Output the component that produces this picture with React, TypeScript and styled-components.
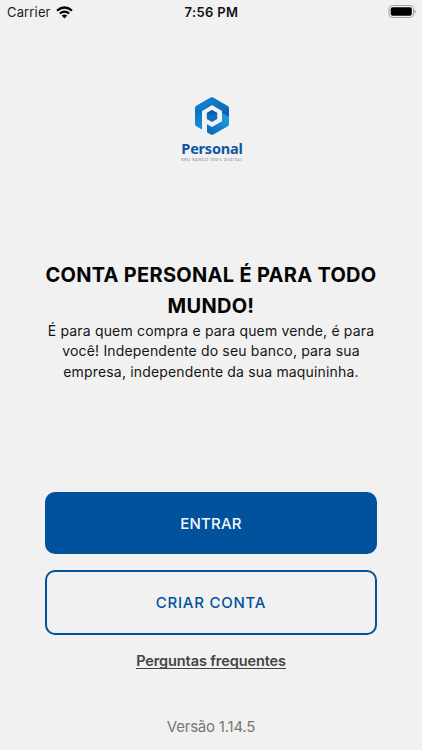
import React from "react";
import styled, { createGlobalStyle } from "styled-components";

const GlobalStyle = createGlobalStyle`
  * { box-sizing: border-box; }
  body { margin: 0; background: #f1f1f1; }
`;

const Screen = styled.main`
  width: 422px;
  height: 750px;
  overflow: hidden;
  display: flex;
  flex-direction: column;
  align-items: center;
  background: #f1f1f1;
  font-family: Inter, "Liberation Sans", sans-serif;
  color: #050505;
`;

const StatusBar = styled.header`
  width: 100%;
  height: 24px;
  padding: 0 6px 0 7px;
  display: grid;
  grid-template-columns: 1fr auto 1fr;
  align-items: center;
`;

const Carrier = styled.div`
  display: flex;
  align-items: center;
  gap: 5px;
  font-size: 13px;
  line-height: 24px;
  letter-spacing: 0.15px;
  color: #1c1c1c;
`;

const Clock = styled.time`
  font-size: 13px;
  font-weight: 600;
  letter-spacing: 0.35px;
  color: #111;
`;

const BatterySlot = styled.div`
  display: flex;
  justify-content: flex-end;
  height: 15px;
`;

const Brand = styled.div`
  margin-top: 72px;
  padding-left: 2px;
  height: 66px;
  display: flex;
  flex-direction: column;
  align-items: center;
`;

const BrandName = styled.div`
  margin-top: 5px;
  font-family: "Noto Sans", sans-serif;
  font-size: 14.5px;
  font-weight: 700;
  line-height: 14px;
  letter-spacing: -0.2px;
  color: #0c57a4;
`;

const BrandTagline = styled.div`
  margin-top: 2px;
  font-size: 4px;
  font-weight: 500;
  line-height: 5px;
  letter-spacing: 0.45px;
  white-space: nowrap;
  color: #92979c;
`;

const Intro = styled.section`
  margin-top: 98px;
  text-align: center;
  white-space: nowrap;
`;

const Title = styled.h1`
  margin: 0;
  font-size: 20px;
  font-weight: 650;
  line-height: 31px;
  letter-spacing: 0.29px;
`;

const Description = styled.p`
  margin: -1px 0 0;
  font-size: 14px;
  line-height: 20.4px;
  letter-spacing: 0.17px;
  color: #151515;
`;

const Actions = styled.div`
  margin-top: 110px;
  display: flex;
  flex-direction: column;
  gap: 16px;
`;

const Button = styled.button<{ $outlined?: boolean }>`
  width: 332px;
  height: ${(p) => (p.$outlined ? 65 : 62)}px;
  padding: 0;
  border: 2px solid #00529c;
  border-radius: 10px;
  background: ${(p) => (p.$outlined ? "transparent" : "#00529c")};
  color: ${(p) => (p.$outlined ? "#00529c" : "#f4f8fc")};
  font-family: inherit;
  font-size: 15px;
  font-weight: 500;
  letter-spacing: ${(p) => (p.$outlined ? 0.75 : 0.2)}px;
`;

const FaqLink = styled.a`
  margin-top: 15px;
  height: 19px;
  border-bottom: 1px solid #444;
  font-size: 14.5px;
  font-weight: 600;
  line-height: 22px;
  letter-spacing: -0.1px;
  color: #444;
`;

const Version = styled.footer`
  margin-top: 46px;
  font-size: 15px;
  line-height: 24px;
  letter-spacing: -0.22px;
  color: #777;
`;

const WifiIcon = () => (
  <svg width="17" height="13" viewBox="0 0 17 13" fill="none" stroke="#050505">
    <path d="M1 4.6Q8.5-1.6 16 4.6" strokeWidth="2.2" />
    <path d="M3.8 7.5Q8.5 3.6 13.2 7.5" strokeWidth="2.1" />
    <path d="M8.5 12.4 5.8 9.6Q8.5 7.6 11.2 9.6Z" fill="#050505" stroke="none" />
  </svg>
);

const BatteryIcon = () => (
  <svg width="28" height="14" viewBox="0 0 28 14">
    <rect x="1" y=".5" width="24.5" height="12" rx="3.5" fill="none" stroke="#a2a2a2" />
    <rect x="2.7" y="2.2" width="21.1" height="8.6" rx="2" fill="#000" />
    <path d="M26.5 4.8v4q1.4-.5 1.4-2t-1.4-2Z" fill="#a2a2a2" />
  </svg>
);

const LogoMark = () => (
  <svg width="36" height="40" viewBox="0 0 36 40">
    <defs>
      <linearGradient id="left" x1="0" y1="0" x2="0" y2="1">
        <stop stopColor="#20a4e7" />
        <stop offset=".45" stopColor="#0872c4" />
        <stop offset="1" stopColor="#1696df" />
      </linearGradient>
      <linearGradient id="right" x1="0" y1="0" x2="1" y2="1">
        <stop stopColor="#1488d6" />
        <stop offset="1" stopColor="#075cab" />
      </linearGradient>
      <linearGradient id="base" x1="0" y1="1" x2="1" y2="0">
        <stop stopColor="#0863b2" />
        <stop offset="1" stopColor="#1fa4e8" />
      </linearGradient>
    </defs>
    <path d="M18 1 2 10Q1 10.6 1 12V28Q1 29.5 2.2 30.2L8 33.4V15L18 9Z" fill="url(#left)" />
    <path d="M16.8 1.5Q18 .8 19.2 1.5L33.8 9.9Q35 10.6 35 12V26L28 22V15L18 9 9 14.3 2 10Z" fill="url(#right)" />
    <path d="M35 21V28Q35 29.5 33.8 30.2L19.4 38.4Q18 39.2 16.6 38.4L13 36.3V28.2L18 31 28 25.2V17Z" fill="url(#base)" />
    <path d="m18 14 5.2 3v6L18 26l-5.2-3v-6Z" fill="#0870bf" />
    <path d="m12.8 17 5.2-3 5.2 3-5.2 3Z" fill="#075cab" />
  </svg>
);

export default function App() {
  return (
    <>
      <GlobalStyle />
      <Screen>
        <StatusBar>
          <Carrier>
            <span>Carrier</span>
            <WifiIcon />
          </Carrier>
          <Clock>7:56 PM</Clock>
          <BatterySlot>
            <BatteryIcon />
          </BatterySlot>
        </StatusBar>
        <Brand>
          <LogoMark />
          <BrandName>Personal</BrandName>
          <BrandTagline>SEU BANCO 100% DIGITAL</BrandTagline>
        </Brand>
        <Intro>
          <Title>
            CONTA PERSONAL É PARA TODO
            <br />
            MUNDO!
          </Title>
          <Description>
            É para quem compra e para quem vende, é para
            <br />
            você! Independente do seu banco, para sua
            <br />
            empresa, independente da sua maquininha.
          </Description>
        </Intro>
        <Actions>
          <Button>ENTRAR</Button>
          <Button $outlined>CRIAR CONTA</Button>
        </Actions>
        <FaqLink>Perguntas frequentes</FaqLink>
        <Version>Versão 1.14.5</Version>
      </Screen>
    </>
  );
}
